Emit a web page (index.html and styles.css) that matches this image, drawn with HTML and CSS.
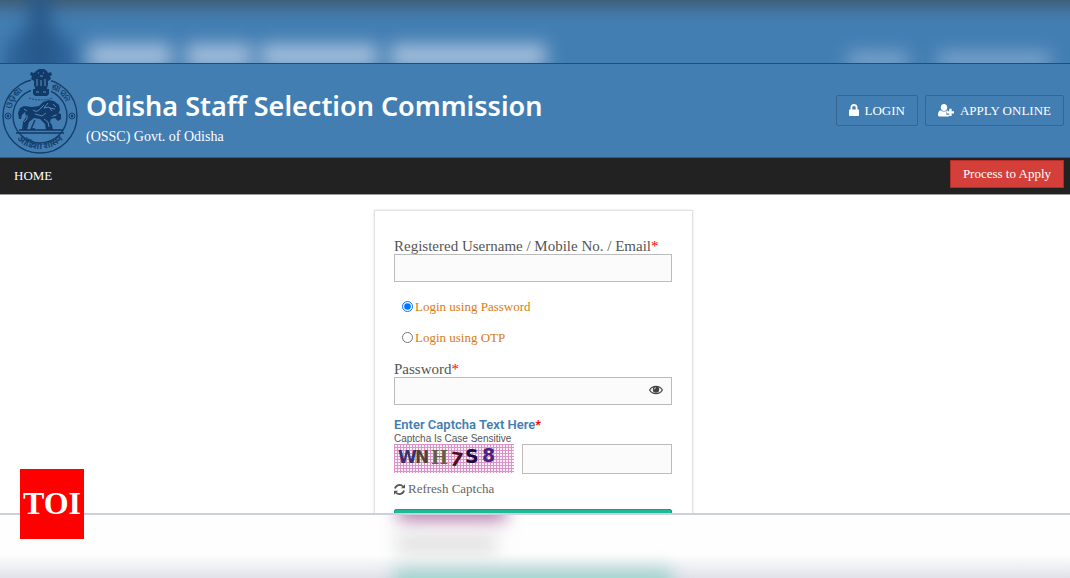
FILE: index.html
```html
<!DOCTYPE html>
<html lang="en">

<head>
    <meta charset="UTF-8">
    <meta name="viewport" content="width=device-width, initial-scale=1.0">
    <title>Odisha Staff Selection Commission</title>
    <link rel="stylesheet" href="styles.css">
</head>

<body>
    <!-- blurred strip above the page -->
    <div class="backdrop backdrop-top">
        <svg class="blur-left" width="600" height="63" aria-hidden="true">
            <circle class="blur-logo" cx="40" cy="62" r="36" />
            <rect class="blur-logo-dark" x="30" y="-10" width="20" height="86" />
            <rect class="blur-title" x="88" y="44" width="84" height="24" />
            <rect class="blur-title" x="186" y="44" width="66" height="24" />
            <rect class="blur-title" x="260" y="44" width="118" height="24" />
            <rect class="blur-title" x="390" y="44" width="156" height="24" />
        </svg>
        <svg class="blur-right" width="260" height="63" aria-hidden="true">
            <rect class="blur-menu" x="38" y="52" width="60" height="18" />
            <rect class="blur-menu" x="128" y="52" width="112" height="18" />
        </svg>
    </div>

    <div class="page">
        <header class="header">
            <svg class="emblem" viewBox="0 66 80 88" aria-label="Government of Odisha emblem" role="img">
                <g fill="none" stroke="#153f6d">
                    <circle cx="40" cy="115" r="37" stroke-width="1.4" />
                    <circle cx="40" cy="115" r="27" stroke-width="1.4" />
                    <circle cx="8" cy="115" r="3" />
                    <circle cx="72" cy="115" r="3" />
                </g>
                <g fill="#153f6d">
                    <circle cx="8" cy="115" r="1.4" />
                    <circle cx="72" cy="115" r="1.4" />
                </g>
                <!-- lion capital -->
                <path fill="#437eb3" d="M31 68h20v28H31z" />
                <path fill="#123a68" d="M36 70l3-2h5l3 2 1 2 3-1 1 3-2 1 1 3-3 2v4l-1 3v1H35v-1l-1-3v-4l-3-2 1-3-2-1 1-3 3 1zM33 88h16v5l-2 2H35l-2-2z" />
                <path stroke="#5b90bf" fill="none" d="M38 72h1M43 72h1M40 75h3M37 78v7M41 79v6M45 78v7M36 91h3M43 91h3" />
                <path stroke="#1c4979" fill="none" stroke-dasharray="2 1" d="M29 97q12 4 24 0" />
                <!-- horse and rider -->
                <path fill="#123a68" d="M20 107l4-2 8 1 7-1 4-4 6-2 5 1 5 4 1 5-2 4-4 1-3 2 5-1 2-3 3 1v5l-3 2-3-3-4 1-1 3 2 3 1 5h-7l-1-6-5-5-6-1-5 4-2 8h-5l1-8 3-5-1-5-3 3-1 4h-2l-1-6z" />
                <path fill="none" stroke="#5b90bf" stroke-width=".9" d="M33 109q4 3 7-1l4-4M48 102l-4 5 5-1 3 4M35 113l7 2 4-3M27 114v4l-3 3M50 107l5 1M44 118l4 3 1 5M53 103l3 3M24 108l3 2" />
                <path fill="none" stroke="#123a68" stroke-width="1.4" d="M35 119l-4 9h4M19 129h44M16 132h48" />
                <path id="arc-left" fill="none" d="M11 108a30 30 0 0 1 20-22" />
                <path id="arc-right" fill="none" d="M51 87a30 30 0 0 1 18 24" />
                <path id="arc-bottom" fill="none" d="M7 115a33 33 0 0 0 66 0" />
                <g class="emblem-text">
                    <text><textPath href="#arc-left">ଓଡ଼ିଶା</textPath></text>
                    <text><textPath href="#arc-right">ଶାସନ</textPath></text>
                    <text text-anchor="middle"><textPath href="#arc-bottom" startOffset="50%">ओडिशा शासन</textPath></text>
                </g>
            </svg>
            <div class="brand">
                <h1>Odisha Staff Selection Commission</h1>
                <p>(OSSC) Govt. of Odisha</p>
            </div>
            <div class="header-links">
                <a href="#" class="btn-outline">
                    <svg width="10" height="13" viewBox="0 0 10 13" aria-hidden="true">
                        <path fill="none" stroke="#fff" stroke-width="1.8" d="M2.4 6V3.6a2.6 2.6 0 0 1 5.2 0V6" />
                        <rect fill="#fff" y="5.5" width="10" height="6.5" rx=".8" />
                    </svg>
                    LOGIN
                </a>
                <a href="#" class="btn-outline">
                    <svg width="16" height="13" viewBox="0 0 16 13" aria-hidden="true">
                        <path fill="#fff" d="M6 0c2 0 3.2 1.5 3.2 3.5S7.8 7 6 7 2.800 5.5 2.800 3.5 4 0 6 0zM2.700 6.300C4.500 8 7.500 8 9.200 6.300l.8.400v.8H8.400v3.200h2.700v1.500l-.6.2h-9C.5 12.400 0 12 0 11c0-2.300.8-4.500 2.700-4.700z" />
                        <path fill="none" stroke="#fff" stroke-width="2.4" d="M12.400 4.800v7.200M8.800 8.400h7.200" />
                    </svg>
                    APPLY ONLINE
                </a>
            </div>
        </header>

        <nav class="navbar">
            <a href="#" class="nav-link">HOME</a>
            <a href="#" class="btn-apply">Process to Apply</a>
        </nav>

        <main>
            <form class="login-card">
                <label for="username">Registered Username / Mobile No. / Email<span class="required">*</span></label>
                <input type="text" id="username">

                <div class="login-types">
                    <label><input type="radio" name="loginType" checked>Login using Password</label>
                    <label><input type="radio" name="loginType">Login using OTP</label>
                </div>

                <label for="password">Password<span class="required">*</span></label>
                <div class="password-box">
                    <input type="password" id="password">
                    <button type="button" class="eye" aria-label="Show password">
                        <svg width="14" height="10" viewBox="0 0 14 10" aria-hidden="true">
                            <path fill="none" stroke="#444" stroke-width="1.2" d="M.6 5C3.500.2 10.500.2 13.400 5 10.500 9.800 3.500 9.800.6 5z" />
                            <circle cx="7" cy="4.500" r="3.200" fill="#444" />
                            <path fill="none" stroke="#fff" stroke-width=".7" d="M5.200 4.400Q5.300 2.800 7 2.700" />
                        </svg>
                    </button>
                </div>

                <label for="captcha" class="captcha-label">Enter Captcha Text Here<span class="required">*</span></label>
                <p class="captcha-hint">Captcha Is Case Sensitive</p>
                <div class="captcha-row">
                    <svg class="captcha-image" width="120" height="29" role="img" aria-label="Captcha">
                        <defs>
                            <pattern id="mesh" width="3" height="3" patternUnits="userSpaceOnUse">
                                <path stroke="#dc93c8" d="M0 .5h3M.5 0v3" />
                            </pattern>
                        </defs>
                        <rect width="120" height="29" fill="#fdf0f9" />
                        <rect width="120" height="29" fill="url(#mesh)" />
                        <g class="captcha-letters">
                            <text x="4" y="19" fill="#36306f">W</text>
                            <text x="21" y="19" fill="#4d4637">N</text>
                            <text x="37" y="20" class="serif" fill="#646043">H</text>
                            <text x="56" y="22" class="wide" fill="#510d22" transform="rotate(8 63 16)">7</text>
                            <text x="71" y="19" class="wide" fill="#1b0b45">S</text>
                            <text x="88" y="18" class="wide" fill="#4c2381">8</text>
                        </g>
                    </svg>
                    <input type="text" id="captcha">
                </div>

                <a href="#" class="refresh">
                    <svg width="11" height="11" viewBox="0 0 11 11" aria-hidden="true">
                        <path fill="none" stroke="#555" stroke-width="1.8" d="M1 4.500C2 .7 6.500-.2 9 2.500M10 6.500C9 10.300 4.500 11.200 2 8.500" />
                        <path fill="#555" d="M11 .3v4H7zM0 10.700v-4h4z" />
                    </svg>
                    Refresh Captcha
                </a>

                <button type="submit" class="btn-submit" aria-label="Login"></button>
            </form>
        </main>
    </div>

    <!-- blurred strip below the page -->
    <div class="backdrop backdrop-bottom">
        <svg width="320" height="65" aria-hidden="true">
            <rect class="blur-captcha" x="24" y="-18" width="108" height="24" />
            <rect class="blur-text" x="22" y="20" width="100" height="18" />
            <rect class="blur-button" x="20" y="54" width="278" height="30" />
        </svg>
    </div>

    <div class="toi-logo">TOI</div>
</body>

</html>
```

FILE: styles.css
```css
* {
    box-sizing: border-box;
}

body {
    margin: 0;
    height: 100vh;
    display: flex;
    flex-direction: column;
    position: relative;
    overflow: hidden;
    font-family: "Liberation Serif", serif;
    font-size: 13px;
    color: #555;
    background-color: #fff;
}

a {
    color: inherit;
    text-decoration: none;
}

h1,
p {
    margin: 0;
}

/* blurred strips */
.backdrop {
    flex: none;
    display: flex;
    overflow: hidden;
}

.backdrop-top {
    height: 63px;
    justify-content: space-between;
    background: linear-gradient(#3f5f7b, #4277a6 14px, #437eb3 24px);
}

.backdrop-top svg {
    flex: none;
}

.backdrop-bottom {
    height: 65px;
    justify-content: center;
    padding-right: 3px;
    border-top: 2px solid #cccfdd;
    background: linear-gradient(#fefefe 40px, #e1e2ea);
}

.backdrop rect,
.backdrop circle {
    filter: blur(9px);
}

.blur-logo {
    fill: #2c6297;
}

.blur-logo-dark {
    fill: #275788;
}

.blur-title {
    fill: #a4bfdc;
}

.blur-menu {
    fill: #7ca5cc;
}

.blur-captcha {
    fill: #b57bab;
}

.blur-text {
    fill: #dedede;
}

.blur-button {
    fill: #a0d3cd;
}

/* page */
.page {
    flex: 1;
    min-height: 0;
    overflow: hidden;
    border-top: 1px solid #34495e;
}

.header {
    display: flex;
    align-items: center;
    height: 94px;
    padding-right: 6px;
    color: #fff;
    background-color: #437eb3;
    border-bottom: 1px solid #315d85;
}

.emblem {
    width: 80px;
    height: 88px;
}

.emblem-text {
    font-family: "Noto Sans", sans-serif;
    font-size: 9px;
    font-weight: bold;
    fill: #153f6d;
}

.brand {
    flex: 1;
    padding: 16px 0 0 6px;
}

.brand h1 {
    font-family: "Noto Sans", sans-serif;
    font-size: 27px;
    font-weight: 600;
    line-height: 36px;
}

.brand p {
    font-size: 14px;
    line-height: 26px;
}

.header-links {
    display: flex;
    gap: 7px;
}

.btn-outline {
    display: flex;
    align-items: center;
    gap: 6px;
    height: 31px;
    padding: 0 12px;
    border: 1px solid #36658f;
    border-radius: 2px;
}

.navbar {
    display: flex;
    justify-content: space-between;
    height: 37px;
    padding: 2px 6px 0 14px;
    color: #fff;
    background-color: #222;
    border-bottom: 1px solid #999;
}

.nav-link {
    line-height: 32px;
}

.btn-apply {
    height: 28px;
    padding: 0 12px;
    line-height: 26px;
    background-color: #d43f3a;
    border: 1px solid #b52b27;
}

/* login form */
main {
    padding: 15px 3px 0 0;
}

.login-card {
    width: 319px;
    margin: 0 auto;
    padding: 27px 20px 27px 19px;
    border: 1px solid #e2e2e2;
    box-shadow: 0 0 2px #ddd;
}

.login-card > label {
    display: block;
    font-size: 15px;
    line-height: 16px;
}

.required {
    color: #f00;
}

.login-card input[type="text"],
.login-card input[type="password"] {
    display: block;
    width: 100%;
    height: 28px;
    border: 1px solid #bbb;
    background-color: #fbfbfb;
}

.login-types {
    margin: 9px 0 8px;
    color: #d97b12;
}

.login-types label {
    display: flex;
    align-items: center;
    height: 31px;
}

.login-types input {
    width: 11px;
    height: 11px;
    margin: 0 2px 0 8px;
}

.password-box {
    position: relative;
}

.eye {
    position: absolute;
    top: 0;
    right: 8px;
    width: 16px;
    height: 26px;
    padding: 0;
    border: none;
    background: none;
}

.login-card .captcha-label {
    margin-top: 12px;
    font-family: Roboto, sans-serif;
    font-size: 13px;
    font-weight: 600;
    color: #437eb3;
}

.captcha-hint {
    font-family: "Liberation Sans", sans-serif;
    font-size: 10px;
    line-height: 11px;
}

.captcha-row {
    display: flex;
    gap: 8px;
}

.captcha-image {
    flex: none;
}

.captcha-letters {
    font-family: "DejaVu Sans", sans-serif;
    font-size: 17px;
    font-weight: bold;
}

.captcha-letters .serif {
    font-family: "DejaVu Serif", serif;
    font-size: 18px;
}

.captcha-letters .wide {
    font-size: 19px;
}

.login-card .captcha-row input {
    height: 30px;
}

.refresh {
    display: flex;
    align-items: center;
    gap: 3px;
    margin: 7px 0 12px;
    line-height: 16px;
    color: #666;
}

.btn-submit {
    width: 100%;
    height: 34px;
    border: 1px solid #1a9c82;
    border-radius: 2px;
    background-color: #22b999;
}

/* floating logo */
.toi-logo {
    position: absolute;
    left: 20px;
    bottom: 39px;
    width: 64px;
    height: 70px;
    font-size: 32px;
    font-weight: bold;
    line-height: 68px;
    text-align: center;
    color: #fff;
    background-color: #f00;
}
```
